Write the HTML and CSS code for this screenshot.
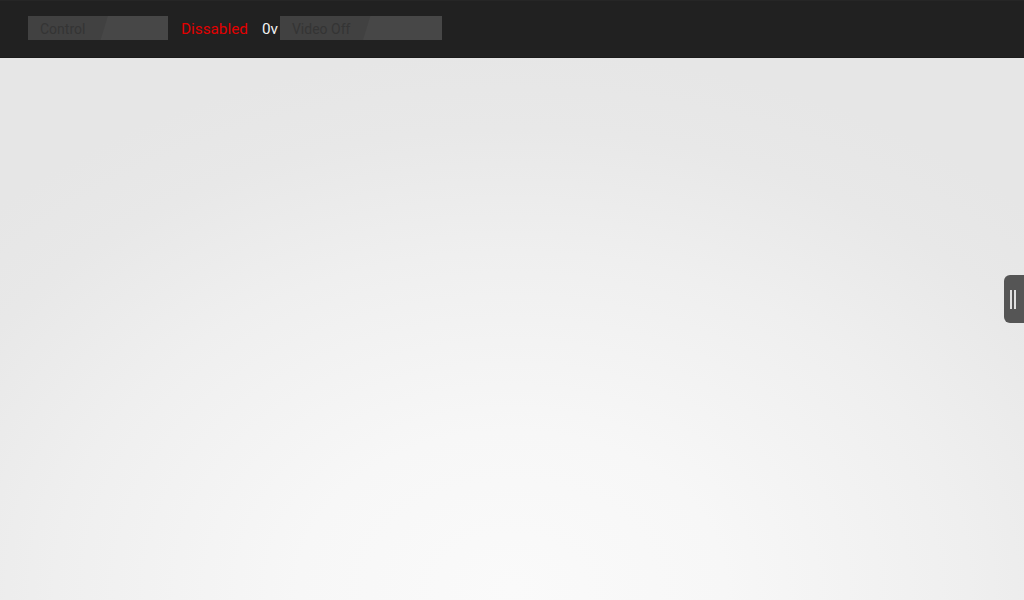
FILE: index.html
```html
<!DOCTYPE html>
<html>
<head>
<meta charset="utf-8">
<link rel="stylesheet" href="styles.css">
</head>
<body>
<div class="app">
  <header class="topbar">
    <div class="toggle toggle-control"><span class="toggle-label">Control</span></div>
    <span class="status">Dissabled</span>
    <span class="volt">0v</span>
    <div class="toggle toggle-video"><span class="toggle-label">Video Off</span></div>
  </header>
  <main class="stage">
    <div class="handle"><span class="grip"></span><span class="grip"></span></div>
  </main>
</div>
</body>
</html>
```
FILE: styles.css
```css
html, body {
  margin: 0;
  padding: 0;
  width: 1024px;
  height: 600px;
  overflow: hidden;
  font-family: Roboto, "Noto Sans", "Liberation Sans", sans-serif;
}

.app {
  display: flex;
  flex-direction: column;
  width: 1024px;
  height: 600px;
}

.topbar {
  height: 56px;
  flex: 0 0 56px;
  background: #212121;
  border-top: 1px solid #262626;
  border-bottom: 1px solid #1c1c1c;
  box-sizing: content-box;
  display: flex;
  align-items: flex-start;
  padding-left: 28px;
}

.toggle {
  margin-top: 15px;
  height: 24px;
  display: flex;
  align-items: center;
  box-sizing: border-box;
  padding-left: 12px;
}

.toggle-control {
  width: 140px;
  background: linear-gradient(107deg, #414141 0, #414141 76px, #474747 77px, #474747 100%);
}

.toggle-video {
  width: 162px;
  background: linear-gradient(107deg, #414141 0, #414141 86px, #474747 87px, #474747 100%);
}

.toggle-label {
  font-size: 14px;
  color: #343434;
  line-height: 24px;
  padding-top: 1px;
}

.status {
  margin-top: 15px;
  margin-left: 13px;
  font-size: 15.3px;
  color: #e30000;
  line-height: 24px;
  padding-top: 1px;
}

.volt {
  margin-top: 15px;
  margin-left: 14px;
  margin-right: 2px;
  font-size: 15.3px;
  color: #f2f2f2;
  line-height: 24px;
  padding-top: 1px;
}

.stage {
  flex: 1;
  position: relative;
  background: radial-gradient(ellipse 760px 560px at 512px 530px, #fafafa 0%, #f7f7f7 28%, #efefef 60%, #e8e8e8 82%, #e6e6e6 96%);
}

.handle {
  position: absolute;
  right: 0;
  top: 217px;
  width: 20px;
  height: 48px;
  background: #555555;
  border-radius: 6px 0 0 6px;
  display: flex;
  align-items: center;
  gap: 2px;
  padding-left: 6px;
  box-sizing: border-box;
}

.grip {
  width: 2px;
  height: 19px;
  background: #e0e0e0;
}
```
